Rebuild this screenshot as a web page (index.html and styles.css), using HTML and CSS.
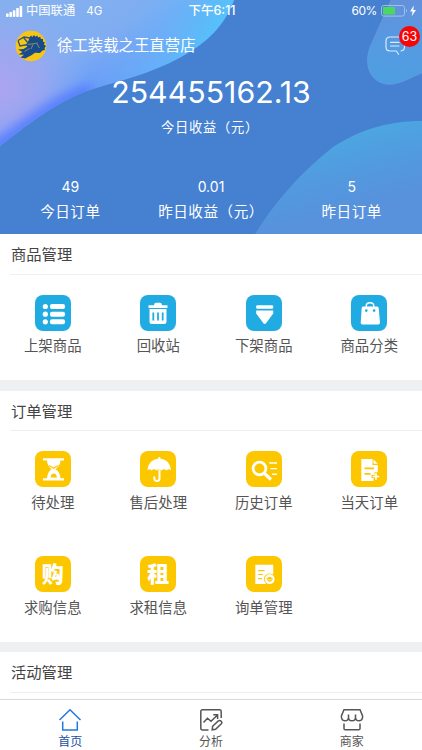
FILE: index.html
```html
<!DOCTYPE html>
<html lang="zh-CN">
<head>
<meta charset="utf-8">
<meta name="viewport" content="width=device-width, initial-scale=1">
<title>首页</title>
<link rel="stylesheet" href="styles.css">
</head>
<body>
<div class="app">
  <header class="hero">
    <svg class="hero-bg" viewBox="0 0 422 234" preserveAspectRatio="none" aria-hidden="true">
      <defs>
        <linearGradient id="g1" gradientUnits="userSpaceOnUse" x1="50" y1="0" x2="105" y2="100">
          <stop offset="0" stop-color="#84b0ee"/><stop offset=".5" stop-color="#80adf2"/><stop offset="1" stop-color="#5e96fb"/>
        </linearGradient>
        <radialGradient id="g2" gradientUnits="userSpaceOnUse" cx="0" cy="88" r="90">
          <stop offset="0" stop-color="#ada4f0"/><stop offset=".45" stop-color="#a0a6f0" stop-opacity=".8"/><stop offset="1" stop-color="#8facf0" stop-opacity="0"/>
        </radialGradient>
        <linearGradient id="g3" gradientUnits="userSpaceOnUse" x1="125" y1="5" x2="205" y2="45">
          <stop offset="0" stop-color="#78b0f2" stop-opacity="0"/><stop offset=".6" stop-color="#68b4f8" stop-opacity=".8"/><stop offset="1" stop-color="#57bff9"/>
        </linearGradient>
        <linearGradient id="g4" gradientUnits="userSpaceOnUse" x1="400" y1="0" x2="390" y2="85">
          <stop offset="0" stop-color="#6391dc"/><stop offset=".6" stop-color="#549be2"/><stop offset="1" stop-color="#4e9ee2"/>
        </linearGradient>
        <linearGradient id="g5" gradientUnits="userSpaceOnUse" x1="355" y1="121" x2="378" y2="205">
          <stop offset="0" stop-color="#4aaae1"/><stop offset=".5" stop-color="#519bdf"/><stop offset="1" stop-color="#5891dc"/>
        </linearGradient>
        <filter id="soft" x="-50%" y="-50%" width="200%" height="200%"><feGaussianBlur stdDeviation="6"/></filter>
        <clipPath id="wave"><path d="M0 0H234C225 25 207 43 181 57C148 75 121 80 90 90C55 102 26 126 0 146Z"/></clipPath>
      </defs>
      <rect width="422" height="234" fill="#4580d1"/>
      <g clip-path="url(#wave)">
        <rect width="240" height="150" fill="url(#g1)"/>
        <rect width="240" height="150" fill="url(#g3)"/>
        <rect width="240" height="150" fill="url(#g2)"/>
        <path d="M-10 153C25 128 53 103 92 91" fill="none" stroke="#527bff" stroke-width="14" filter="url(#soft)"/>
      </g>
      <path d="M391 0L370 47C362 69 374 87 394 84C405 82 413 76 422 73V0Z" fill="url(#g4)"/>
      <path d="M391 0L370 47C362 69 374 87 394 84C405 82 413 76 422 73" fill="none" stroke="#6e9be0" stroke-opacity=".6"/>
      <path d="M255 234C274 203 301 172 333 147C361 129 389 121 422 121V234Z" fill="url(#g5)"/>
    </svg>

    <div class="status">
      <div class="status-left">
        <svg class="signal" viewBox="0 0 17 11"><g fill="#fff"><rect y="7.6" width="2.6" height="3.4" rx=".7"/><rect x="3.4" y="6" width="2.6" height="5" rx=".7"/><rect x="6.8" y="4.2" width="2.6" height="6.8" rx=".7"/><rect x="10.2" y="2.1" width="2.6" height="8.9" rx=".7"/><rect x="13.6" width="2.6" height="11" rx=".7"/></g></svg>
        <span class="carrier">中国联通</span><span class="net">4G</span>
      </div>
      <time class="clock">下午6:11</time>
      <div class="status-right">
        <span>60%</span>
        <svg class="battery" viewBox="0 0 37 12"><rect x=".5" y=".5" width="23" height="10.6" rx="2.3" fill="none" stroke="#b3cbea" stroke-opacity=".8"/><rect x="2" y="2" width="12" height="7.6" rx=".7" fill="#4cd763"/><path d="M25 4Q27 5.7 25 7.5Z" fill="#a8c4eb"/><path d="M32.8.4 29 6.4H31.6L30.7 11.2 35 4.9H32.3Z" fill="#fff"/></svg>
      </div>
    </div>

    <div class="store">
      <svg class="avatar" viewBox="0 0 32 32">
        <circle cx="16" cy="16" r="15.3" fill="#f8c513"/>
        <path d="M14.5 7.5 16 5.5 17.3 7 19 5 20.3 6.8 22.2 5.5 23.2 7.5 25.3 6.8 25.9 9 28 9 28 11.5 29.8 12.5 29 14.5 31 16 29.5 18 30 20 27.5 20.5 25 23 20 22.8 16 25.5 10 28.5 5.5 27.5 9 24.8 3.5 24.5 7.5 22 3 19.5 8.5 19 12.5 16.5 10.5 15 13 12Z" fill="#174b8c"/>
        <path d="M3 10.5 9 7 15 8M3 10.5 5 16 13 14.5M8.5 7.5 13.5 13.5" fill="none" stroke="#2b5683" stroke-width="1.3"/>
        <path d="M13 14.5 23 13M18 14.5 16 19M22 14 24.5 18M9.5 21.5 14.5 18.5" fill="none" stroke="#b9aa47" stroke-width=".7"/>
      </svg>
      <h1 class="store-name">徐工装载之王直营店</h1>
      <a class="message">
        <svg class="message-icon" viewBox="0 0 22 20" fill="none" stroke="#d8ebfb" stroke-width="1.2" stroke-linecap="round"><path d="M9.5 15H5Q1 15 1 11V5Q1 1 5 1H15Q19.5 1 19.5 5V11Q19.5 14.5 16 15M9.5 15H11.5L13.5 18.3M5.5 6.3H14M5.5 10H14"/></svg>
        <span class="badge">63</span>
      </a>
    </div>

    <div class="income">
      <strong class="amount">254455162.13</strong>
      <span class="income-label">今日收益（元）</span>
    </div>

    <div class="stats">
      <div class="stat"><b>49</b><span>今日订单</span></div>
      <div class="stat"><b>0.01</b><span>昨日收益（元）</span></div>
      <div class="stat"><b>5</b><span>昨日订单</span></div>
    </div>
  </header>

  <main class="content">
    <section class="panel goods">
      <h2 class="panel-title">商品管理</h2>
      <div class="grid">
        <a class="item"><svg class="icon blue" viewBox="0 0 36 36"><g fill="#fff"><circle cx="10.3" cy="11.5" r="2.6"/><circle cx="10.3" cy="19.2" r="2.6"/><circle cx="10.3" cy="26.8" r="2.6"/><rect x="15" y="9" width="15" height="5" rx="2"/><rect x="15" y="16.7" width="15" height="5" rx="2"/><rect x="15" y="24.3" width="15" height="5" rx="2"/></g></svg><span>上架商品</span></a>
        <a class="item"><svg class="icon blue" viewBox="0 0 36 36"><path d="M8.5 10.2H14Q14.2 7.8 16 7.8H20Q21.8 7.8 22 10.2H27.5V13H8.5ZM9.5 14H26.5V26.5Q26.5 29 24 29H12Q9.5 29 9.5 26.5Z" fill="#fff"/><path d="M13.3 17.5V25.5M18 17.5V25.5M22.7 17.5V25.5" stroke="#20ace3" stroke-width="1.8"/></svg><span>回收站</span></a>
        <a class="item"><svg class="icon blue" viewBox="0 0 36 36"><rect x="10.2" y="10.3" width="17" height="3.5" rx="1" fill="#fff"/><path d="M10.2 15.5H27.2V18.5L20.2 28Q18.7 30 17.2 28L10.2 18.5Z" fill="#fff"/></svg><span>下架商品</span></a>
        <a class="item"><svg class="icon blue" viewBox="0 0 36 36"><path d="M15.2 12.5V11Q15.2 7.7 19 7.7T22.8 11V12.5" fill="none" stroke="#fff" stroke-width="1.4"/><path d="M12 11.5H26.2Q27.5 11.5 27.7 13L29 27.5Q29 29.5 27 29.5H11.5Q9.5 29.5 9.7 27.5L10.7 13Q10.8 11.5 12 11.5Z" fill="#fff"/><circle cx="15.3" cy="15.6" r="1.3" fill="#20ace3"/><circle cx="23.1" cy="15.6" r="1.3" fill="#20ace3"/></svg><span>商品分类</span></a>
      </div>
    </section>

    <section class="panel orders">
      <h2 class="panel-title">订单管理</h2>
      <div class="grid">
        <a class="item"><svg class="icon yellow" viewBox="0 0 36 36"><path d="M8 7.3H29V9.4H8ZM8 27.2H29V29.4H8ZM12 9H25.5Q25.5 14.5 20.5 18.3Q25.5 21.5 25.5 28H12Q12 21.5 16.5 18.3Q12 14.5 12 9Z" fill="#fff"/><path d="M14.3 14.5 18.7 17.3 23.2 14.5" fill="none" stroke="#fdc700" stroke-width="1.2"/><path d="M15.5 26.5Q16 22.5 18.7 22.5T22 26.5Z" fill="#fdc700"/></svg><span>待处理</span></a>
        <a class="item"><svg class="icon yellow" viewBox="0 0 36 36"><path d="M7.3 19.5Q8.5 8.5 18.5 7.5V6H20.2V7.5Q30 8.5 31 19.5Q28.8 17 26.5 19.5Q24 17 21.5 19.5Q19.2 17 16.5 19.5Q14.2 17 11.5 19.5Q9.5 17 7.3 19.5Z" fill="#fff"/><path d="M19.5 18.5V27.5Q19.5 30 17 30T14.3 27.2V25.5" fill="none" stroke="#fff" stroke-width="2"/></svg><span>售后处理</span></a>
        <a class="item"><svg class="icon yellow" viewBox="0 0 36 36" fill="none" stroke="#fff"><circle cx="13.5" cy="17.5" r="6.4" stroke-width="2.8"/><path d="M18 22 25 28.5" stroke-width="3.2"/><path d="M23.3 12H31M24.5 17.6H31M26 23.3H31" stroke-width="1.4"/></svg><span>历史订单</span></a>
        <a class="item"><svg class="icon yellow" viewBox="0 0 36 36"><path d="M10.3 8H21.5V14H26.8V21.2H23.7V24H20.5V27H22.5V30H10.3ZM22.5 8.5 26.8 12.8H22.5Z" fill="#fff"/><path d="M13.5 17.4H23M13.5 22.8H19.5" stroke="#fdc700" stroke-width="1.7"/><path d="M25 22.2V28.8M21.7 25.5H28.3" stroke="#fff" stroke-width="1.6"/></svg><span>当天订单</span></a>
        <a class="item"><i class="icon yellow glyph">购</i><span>求购信息</span></a>
        <a class="item"><i class="icon yellow glyph">租</i><span>求租信息</span></a>
        <a class="item"><svg class="icon yellow" viewBox="0 0 36 36"><path d="M9.3 8.8H27.2V28H9.3Z" fill="#fff"/><path d="M12.2 14.7H18.5M12.2 18.5H17M12.2 22.7H16" stroke="#fdc700" stroke-width="1.2"/><circle cx="23.7" cy="23.2" r="5.8" fill="#fdc700"/><circle cx="23.7" cy="23.2" r="4.9" fill="#fff"/><path d="M20.3 22.3 23.7 20.8 27 22.3 26 24.6 23.7 26 21.4 24.6Z" fill="#fdc700"/><path d="M20.7 22.8 23.7 24 26.7 22.8" fill="none" stroke="#fff" stroke-width=".6"/></svg><span>询单管理</span></a>
      </div>
    </section>

    <section class="panel activity">
      <h2 class="panel-title">活动管理</h2>
    </section>
  </main>

  <nav class="tabs">
    <a class="tab active"><svg viewBox="0 0 24 24" fill="none" stroke="#2079e0" stroke-width="1.5"><path d="M1.5 12 12 1.8 22.5 12M4.7 13.5V22H19.3V13.5"/></svg><span>首页</span></a>
    <a class="tab"><svg viewBox="0 0 24 24" fill="none" stroke="#555" stroke-width="1.5"><path d="M9.5 22H3.5Q1.8 22 1.8 20.3V3.5Q1.8 1.8 3.5 1.8H20.5Q22.2 1.8 22.2 3.5V10M4.5 14.5 8.5 10.3 12 13.3 18.5 7M14.3 6.7H18.6V11"/><path d="M13.2 21.8 13.6 18.3 19.3 12.9Q21 12 22.2 13.3T22.3 15.8L16.6 21.3Z"/></svg><span>分析</span></a>
    <a class="tab"><svg viewBox="0 0 24 24" fill="none" stroke="#555" stroke-width="1.5"><path d="M4 1.8H20L22.6 8Q22.8 12.5 19.2 12.8Q15.5 12.8 15.5 9.5Q15.5 12.8 12 12.8T8.5 9.5Q8.5 12.8 4.8 12.8Q1.2 12.5 1.4 8ZM8.5 10V6.5M15.5 10V6.5M4 15.5V20.5Q4 21.8 5.3 21.8H18.7Q20 21.8 20 20.5V15.5"/></svg><span>商家</span></a>
  </nav>
</div>
</body>
</html>
```

FILE: styles.css
```css
* { box-sizing: border-box; }

body {
  margin: 0;
  font-family: Inter, "Noto Sans CJK SC", sans-serif;
  color: #444;
  background: #fff;
}

.app {
  width: 422px;
  height: 750px;
  display: flex;
  flex-direction: column;
  overflow: hidden;
}

.hero {
  position: relative;
  flex: none;
  height: 234px;
  color: #fff;
  overflow: hidden;
}

.hero-bg {
  position: absolute;
  inset: 0;
  width: 100%;
  height: 100%;
  z-index: -1;
}

.status {
  display: grid;
  grid-template-columns: 1fr auto 1fr;
  align-items: center;
  height: 22px;
  padding: 0 4px 0 6px;
  font-size: 12px;
  line-height: 22px;
}

.status-left, .status-right { display: flex; align-items: center; }
.status-right { justify-content: flex-end; gap: 4px; }
.status-right span { letter-spacing: -0.4px; }
.signal { width: 17px; height: 11px; margin-right: 3px; }
.carrier { font-size: 12.3px; }
.net { margin-left: 11px; font-size: 11.5px; }
.clock { font-size: 12.5px; font-weight: 500; }
.battery { width: 37px; height: 12px; }

.store {
  display: flex;
  align-items: center;
  height: 48px;
  padding: 0 15px;
}

.avatar { width: 32px; height: 32px; }

.store-name {
  margin: 0 0 0 10px;
  font-size: 15.4px;
  font-weight: 400;
  line-height: 22px;
}

.message { position: relative; margin-left: auto; height: 20px; }
.message-icon { display: block; width: 22px; height: 20px; }

.badge {
  position: absolute;
  left: 14px;
  top: -10px;
  width: 21px;
  height: 21px;
  border-radius: 50%;
  background: #fa0505;
  font-size: 12.5px;
  line-height: 21px;
  text-align: center;
}

.income {
  display: flex;
  flex-direction: column;
  align-items: center;
  height: 107px;
}

.amount { margin-top: 3px; font-size: 30.3px; font-weight: 400; line-height: 38px; }
.income-label { margin-top: 6px; padding-right: 2px; font-size: 13.3px; letter-spacing: 0.7px; line-height: 20px; }

.stats { display: grid; grid-template-columns: repeat(3, 1fr); }
.stat { display: flex; flex-direction: column; align-items: center; }
.stat b { font-size: 14px; font-weight: 400; line-height: 20px; }
.stat span { margin-top: 5px; font-size: 14.6px; letter-spacing: 0.5px; line-height: 20px; white-space: nowrap; }

.content {
  flex: 1;
  min-height: 0;
  overflow: hidden;
  background: #eff0f2;
}

.panel { background: #fff; margin-bottom: 10px; }
.goods { height: 146px; margin-bottom: 11px; }
.orders { height: 251px; }
.activity { height: 160px; }

.panel-title {
  height: 41px;
  margin: 0 0 0 10px;
  padding-left: 1px;
  border-bottom: 1px solid #efefef;
  font-size: 15.3px;
  font-weight: 400;
  line-height: 41px;
}

.orders .panel-title { height: 40px; line-height: 41px; }

.grid {
  display: grid;
  grid-template-columns: repeat(4, 1fr);
  grid-auto-rows: 105px;
  padding-top: 20px;
}

.item {
  display: flex;
  flex-direction: column;
  align-items: center;
  font-size: 14.4px;
  line-height: 20px;
  color: #555;
}

.item > span { margin-top: 5px; }
.orders .item > span { margin-top: 6px; }

.icon { width: 36px; height: 36px; border-radius: 8px; }
.blue { background: #20ace3; }
.yellow { background: #fdc700; }

.glyph {
  color: #fff;
  font-size: 22px;
  font-style: normal;
  font-weight: 900;
  line-height: 37px;
  text-align: center;
}

.tabs {
  flex: none;
  display: grid;
  grid-template-columns: repeat(3, 1fr);
  height: 51px;
  border-top: 1px solid #d9d9d9;
  background: #fff;
}

.tab {
  display: flex;
  flex-direction: column;
  align-items: center;
  padding-top: 8px;
  font-size: 12px;
  line-height: 18px;
  color: #555;
}

.tab svg { width: 24px; height: 24px; }
.tab span { margin-top: 1px; }
.active { color: #17519e; }
```
